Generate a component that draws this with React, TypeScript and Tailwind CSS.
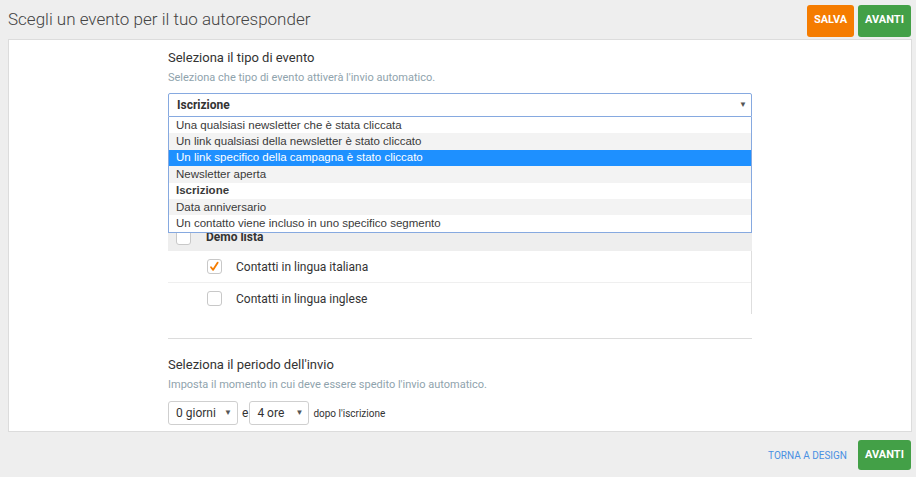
import React from 'react';

const options = [
  { label: 'Una qualsiasi newsletter che è stata cliccata' },
  { label: 'Un link qualsiasi della newsletter è stato cliccato' },
  { label: 'Un link specifico della campagna è stato cliccato', active: true },
  { label: 'Newsletter aperta' },
  { label: 'Iscrizione', bold: true },
  { label: 'Data anniversario' },
  { label: 'Un contatto viene incluso in uno specifico segmento' },
];

function Caret() {
  return <span className="text-[8px] leading-none text-[#555]">▼</span>;
}

function SmallSelect({ value, width }: { value: string; width: string }) {
  return (
    <div className={`flex h-6 items-center justify-between rounded-[3px] border border-[#cfcfcf] bg-white pl-[7px] pr-[5px] text-[12px] text-[#333] ${width}`}>
      <span>{value}</span>
      <Caret />
    </div>
  );
}

function Checkbox({ checked }: { checked?: boolean }) {
  return (
    <span className="flex h-[15px] w-[15px] shrink-0 items-center justify-center rounded-[3px] border border-[#c8c8c8] bg-white">
      {checked && (
        <svg viewBox="0 0 12 12" className="h-[11px] w-[11px]">
          <path d="M2.2 6.8 L4.5 9.6 L9.4 1.8" fill="none" stroke="#f57c00" strokeWidth="2" strokeLinecap="round" strokeLinejoin="round" />
        </svg>
      )}
    </span>
  );
}

export default function App() {
  return (
    <div className="min-h-[477px] bg-[#eeeeee] font-['Roboto',sans-serif] text-[#333]">
      {/* header */}
      <div className="flex h-[39px] items-center justify-between pl-2 pr-[5px]">
        <h1 className="text-[17px] font-light text-[#444]">Scegli un evento per il tuo autoresponder</h1>
        <div className="flex gap-1 pt-[2px]">
          <button className="h-8 w-[47px] rounded-[3px] bg-[#f57c00] text-[11px] font-bold text-white">SALVA</button>
          <button className="h-8 w-[53px] rounded-[3px] bg-[#43a047] text-[11px] font-bold text-white">AVANTI</button>
        </div>
      </div>

      {/* panel */}
      <div className="ml-2 mr-1 h-[393px] border border-[#dcdcdc] bg-white">
        <div className="mx-auto w-[584px] pt-[9px]">
          <div className="text-[13px] leading-[18px] text-[#333]">Seleziona il tipo di evento</div>
          <div className="mt-[3px] text-[11px] leading-4 text-[#8fa3ad]">Seleziona che tipo di evento attiverà l'invio automatico.</div>

          <div className="relative mt-[7px]">
            <div className="flex h-6 items-center justify-between rounded-t-[2px] border border-[#86a9e0] pl-[8px] pr-[4px] text-[12px] font-bold text-[#333]">
              <span>Iscrizione</span>
              <Caret />
            </div>
            <ul className="absolute left-0 right-0 top-full z-10 border border-t-0 border-[#86a9e0] bg-white font-['Liberation_Sans',sans-serif] text-[11.5px] text-[#3a3a3a]">
              {options.map((o, i) => (
                <li
                  key={o.label}
                  className={`flex h-[16.4px] items-center pl-[7px] ${
                    o.active ? 'bg-[#1e90ff] text-white' : i % 2 === 1 ? 'bg-[#f3f3f3]' : 'bg-white'
                  } ${o.bold ? 'font-bold' : ''}`}
                >
                  {o.label}
                </li>
              ))}
            </ul>
          </div>

          {/* space taken by the list picker, covered by the open dropdown */}
          <div className="h-[110px]" />

          <div className="text-[12px]">
            <div className="flex h-[24px] items-start gap-[15px] bg-[#eeeeee] pl-2 pt-[3px]">
              <Checkbox />
              <span className="font-bold leading-[15px]">Demo lista</span>
            </div>
            <div className="border-r border-[#dedede]">
              <div className="flex h-[32px] items-center border-b border-[#efefef] pl-[39px]">
                <Checkbox checked />
                <span className="ml-[14px]">Contatti in lingua italiana</span>
              </div>
              <div className="flex h-[31px] items-center pl-[39px]">
                <Checkbox />
                <span className="ml-[14px]">Contatti in lingua inglese</span>
              </div>
            </div>
          </div>

          <div className="mt-[24px] border-t border-[#dcdcdc]" />

          <div className="mt-[17px] text-[13px] leading-[18px]">Seleziona il periodo dell'invio</div>
          <div className="mt-[3px] text-[11px] leading-4 text-[#8fa3ad]">Imposta il momento in cui deve essere spedito l'invio automatico.</div>

          <div className="mt-2 flex items-center text-[10px]">
            <SmallSelect value="0 giorni" width="w-[70px]" />
            <span className="ml-[4px] mr-[1px] text-[12px]">e</span>
            <SmallSelect value="4 ore" width="w-[60px]" />
            <span className="ml-[4px]">dopo l'iscrizione</span>
          </div>
        </div>
      </div>

      {/* footer */}
      <div className="mt-[8px] flex items-center justify-end gap-[11px] pr-[5px]">
        <a className="text-[10px] text-[#4a90e2]">TORNA A DESIGN</a>
        <button className="h-[30px] w-[53px] rounded-[3px] bg-[#43a047] text-[11px] font-bold text-white">AVANTI</button>
      </div>
    </div>
  );
}
